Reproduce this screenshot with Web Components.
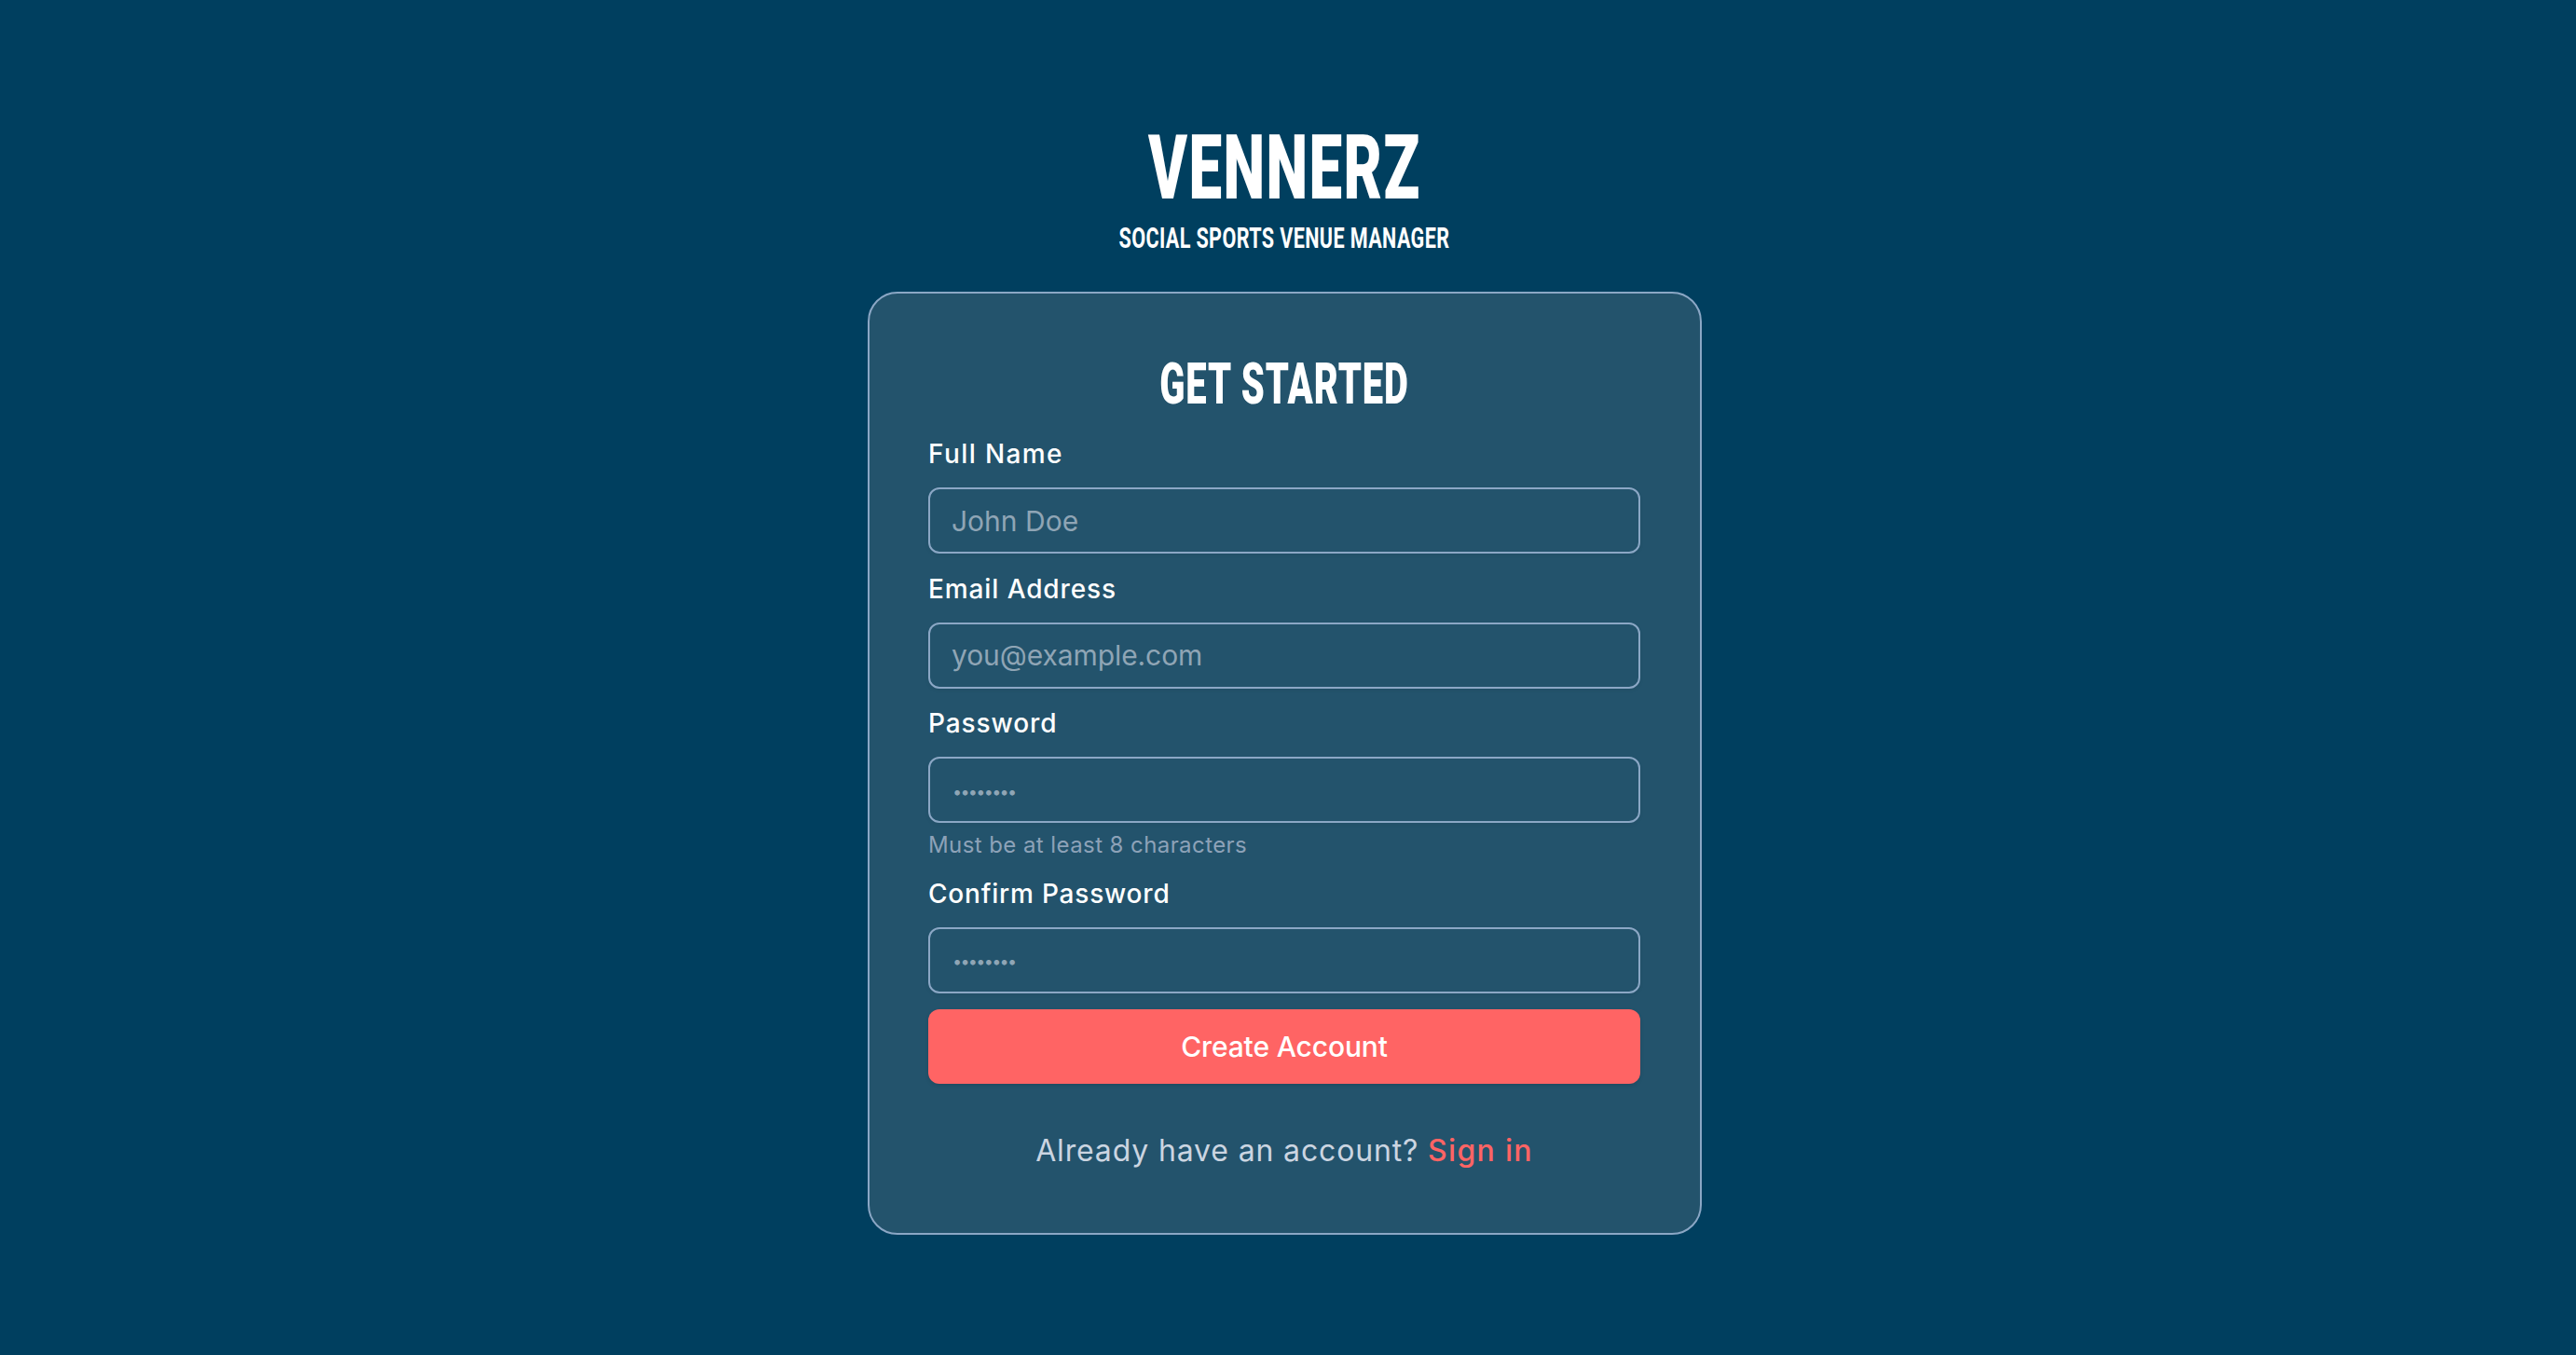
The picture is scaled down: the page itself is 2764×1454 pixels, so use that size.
<!doctype html>
<html lang="en"><head><meta charset="utf-8"><title>Vennerz</title>
<style>html,body{margin:0;background:#003f5f}</style></head>
<body>
<signup-page>
  <brand-header slot="brand" name="VENNERZ" tagline="SOCIAL SPORTS VENUE MANAGER"></brand-header>
  <auth-card heading="GET STARTED">
    <form-field label="Full Name" placeholder="John Doe" style="--ls:1.4px;--pls:0px"></form-field>
    <form-field label="Email Address" placeholder="you@example.com" type="email" style="--ls:.9px;--pls:-.08px"></form-field>
    <form-field label="Password" placeholder="••••••••" type="password" hint="Must be at least 8 characters" style="--ls:.9px"></form-field>
    <form-field label="Confirm Password" placeholder="••••••••" type="password" style="--ls:.8px"></form-field>
    <primary-button>Create Account</primary-button>
    <auth-footer>Already have an account? <a href="#" slot="link">Sign in</a></auth-footer>
  </auth-card>
</signup-page>
<script>
function def(name,html,init){customElements.define(name,class extends HTMLElement{constructor(){super();const r=this.attachShadow({mode:'open'});r.innerHTML=html;if(init)init(this,r)}})}
def('signup-page',`<style>:host{display:flex;flex-direction:column;align-items:center;box-sizing:border-box;min-height:100vh;padding:132px 8px 0 0;background:#003f5f;color:#fff}</style><slot name="brand"></slot><slot></slot>`);
def('brand-header',`<style>:host{display:flex;flex-direction:column;align-items:center;font-family:Roboto,sans-serif;color:#fff;margin-bottom:38px}
h1{margin:0;font-size:97px;line-height:96px;font-weight:900;transform:scaleX(.655);letter-spacing:2.2px}
p{margin:7px 0 0;font-size:32px;line-height:40px;font-weight:700;transform:scaleX(.675);letter-spacing:.55px}</style><h1></h1><p></p>`,(h,r)=>{r.querySelector('h1').textContent=h.getAttribute('name');r.querySelector('p').textContent=h.getAttribute('tagline')});
def('auth-card',`<style>:host{display:block;box-sizing:border-box;width:895px;background:#23536c;border:2px solid #8ba7c5;border-radius:32px;padding:62px 63.5px 66px}
h2{margin:0 0 25px;text-align:center;font:900 62px/70px Roboto,sans-serif;color:#fff;transform:scaleX(.645);letter-spacing:1.4px}</style><h2></h2><slot></slot>`,(h,r)=>{r.querySelector('h2').textContent=h.getAttribute('heading')});
def('form-field',`<style>:host{display:block;margin-bottom:22.5px;font-family:Inter,sans-serif}
label{display:block;font-size:28px;line-height:30px;font-weight:500;color:#fff;letter-spacing:var(--ls,0);margin-bottom:21px}
input{display:block;box-sizing:border-box;width:100%;height:71px;margin:0;padding:0 24px 0 23px;background:transparent;border:2px solid #8ba7c5;border-radius:12px;box-shadow:0 2px 4px rgba(0,0,0,.05);font:400 30px Inter,sans-serif;color:#fff;outline:none}
input::placeholder{color:#8fa5b5;opacity:1;letter-spacing:var(--pls,0)}
input[type=password]{padding:0 24px 6px}
input[type=password]::placeholder{font-size:18px;letter-spacing:-1.7px}
small{display:block;margin-top:8px;margin-bottom:-2px;font-size:24px;line-height:32px;color:#8da2b8;letter-spacing:.42px}
small:empty{display:none}</style><label></label><input><small></small>`,(h,r)=>{const i=r.querySelector('input');r.querySelector('label').textContent=h.getAttribute('label');i.placeholder=h.getAttribute('placeholder');i.type=h.getAttribute('type')||'text';r.querySelector('small').textContent=h.getAttribute('hint')||''});
def('primary-button',`<style>:host{display:block;margin-top:-5.5px}
button{display:block;box-sizing:border-box;width:100%;height:80px;border:0;border-radius:12px;background:#ff6464;box-shadow:0 2px 4px rgba(0,0,0,.1);color:#fff;font:500 30px Inter,sans-serif;letter-spacing:-.15px;padding:0}</style><button type="submit"><slot></slot></button>`);
def('auth-footer',`<style>:host{display:block;margin-top:50px;text-align:center;font:400 32px/44px Inter,sans-serif;color:#cbd5e1;letter-spacing:.85px}
::slotted(a){color:#ff6464;font-weight:500;text-decoration:none;letter-spacing:1.3px}</style><slot></slot><slot name="link"></slot>`);
</script>
</body></html>
